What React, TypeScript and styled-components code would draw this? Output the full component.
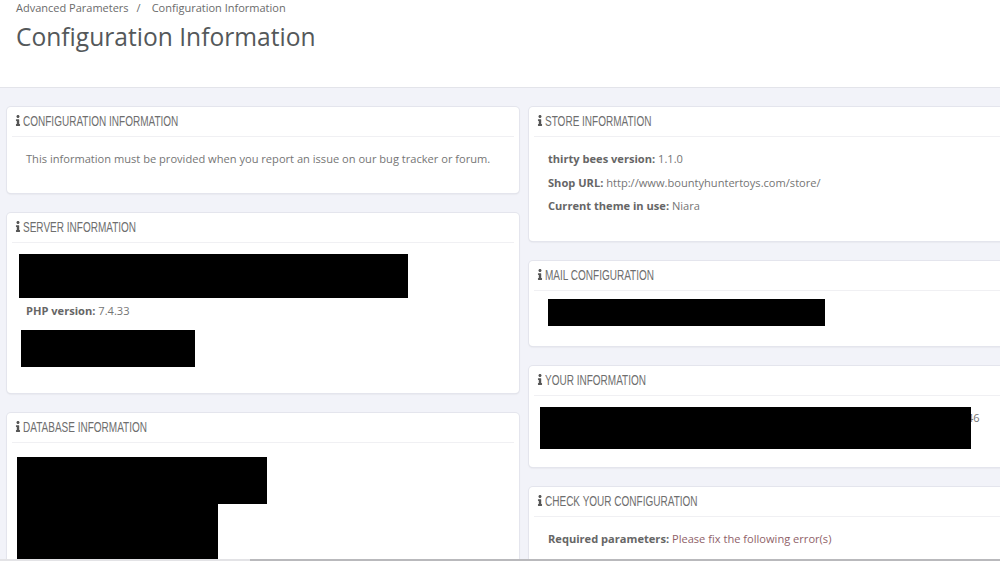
import React from 'react'
import styled, { createGlobalStyle } from 'styled-components'
import { FaInfo } from 'react-icons/fa'

const GlobalStyle = createGlobalStyle`
  html, body {
    margin: 0;
    height: 100%;
    overflow: hidden;
    background: #f2f3f9;
    font-family: 'Open Sans', 'Liberation Sans', sans-serif;
    color: #757575;
  }
`

const Page = styled.div`
  width: 1000px;
  height: 561px;
  overflow: hidden;
  position: relative;
`

const Header = styled.header`
  height: 88px;
  box-sizing: border-box;
  background: #fff;
  border-bottom: 1px solid #e3e4ea;
  padding-left: 16px;
`

const Breadcrumb = styled.div`
  display: flex;
  font-size: 11px;
  line-height: 16px;
  color: #6b6b6b;
`

const Separator = styled.span`
  margin: 0 11px 0 8px;
`

const Title = styled.h1`
  margin: 3px 0 0;
  font-size: 24.6px;
  font-weight: 400;
  line-height: 36px;
  color: #54585a;
`

const Columns = styled.div`
  display: grid;
  grid-template-columns: 512px 500px;
  column-gap: 10px;
  padding: 19px 0 0 7px;
`

const Column = styled.div`
  display: flex;
  flex-direction: column;
  gap: 20px;
`

const Card = styled.section<{ $height: number }>`
  box-sizing: border-box;
  height: ${(p) => p.$height}px;
  background: #fff;
  border-radius: 4px;
  box-shadow: 0 0 0 1px #e4e5ed, 0 1px 2px rgba(0, 0, 0, 0.12);
`

const CardHeading = styled.h3`
  display: flex;
  align-items: center;
  gap: 2px;
  box-sizing: border-box;
  height: 30px;
  margin: 0 5px;
  padding: 0 0 2px 3px;
  border-bottom: 1px solid #f0f0f3;
  font-size: 14px;
  font-weight: 400;
  color: #6e6e6e;
  svg {
    width: 6px;
    height: 11px;
    color: #555;
    flex: none;
  }
`

const HeadingLabel = styled.span`
  display: inline-block;
  font-family: 'Liberation Sans', sans-serif;
  white-space: nowrap;
  transform: scaleX(0.715);
  transform-origin: left center;
`

const CardBody = styled.div<{ $pt?: number; $pl?: number }>`
  padding: ${(p) => p.$pt ?? 13}px 0 0 ${(p) => p.$pl ?? 19}px;
`

const Line = styled.p<{ $top?: number; $gap?: number; $ml?: number }>`
  margin: ${(p) => p.$top ?? 0}px 0 ${(p) => p.$gap ?? 5.5}px ${(p) => p.$ml ?? 0}px;
  font-size: 11.1px;
  line-height: 18px;
  strong {
    font-weight: 700;
    color: #666;
  }
`

const ErrorText = styled.span`
  color: #8f5f69;
`

const Redaction = styled.div<{ $w: number; $h: number; $ml?: number }>`
  position: relative;
  flex: none;
  width: ${(p) => p.$w}px;
  height: ${(p) => p.$h}px;
  margin-left: ${(p) => p.$ml ?? 0}px;
  background: #000;
`

const RedactedRow = styled.div`
  display: flex;
  align-items: flex-start;
`

const Trailing = styled.span`
  margin: 2px 0 0 -4px;
  font-size: 11px;
  line-height: 18px;
`

const ScrollLine = styled.div`
  position: absolute;
  left: 0;
  right: 0;
  bottom: 0;
  height: 2px;
  background: linear-gradient(to right, #e3e3e6 250px, #b9b9bc 250px);
`

const Heading: React.FC<{ title: string }> = ({ title }) => (
  <CardHeading>
    <FaInfo />
    <HeadingLabel>{title}</HeadingLabel>
  </CardHeading>
)

const App: React.FC = () => {
  return (
    <Page>
      <GlobalStyle />
      <Header>
        <Breadcrumb>
          <span>Advanced Parameters</span>
          <Separator>/</Separator>
          <span>Configuration Information</span>
        </Breadcrumb>
        <Title>Configuration Information</Title>
      </Header>
      <Columns>
        <Column>
          <Card $height={86}>
            <Heading title="CONFIGURATION INFORMATION" />
            <CardBody>
              <Line>This information must be provided when you report an issue on our bug tracker or forum.</Line>
            </CardBody>
          </Card>
          <Card $height={180}>
            <Heading title="SERVER INFORMATION" />
            <CardBody $pl={12} $pt={11}>
              <Redaction $w={389} $h={44} />
              <Line $top={4} $ml={7} $gap={10}>
                <strong>PHP version:</strong> 7.4.33
              </Line>
              <Redaction $w={174} $h={37} $ml={2} />
            </CardBody>
          </Card>
          <Card $height={200}>
            <Heading title="DATABASE INFORMATION" />
            <CardBody $pl={10} $pt={14}>
              <Redaction $w={250} $h={47} />
              <Redaction $w={201} $h={70} />
            </CardBody>
          </Card>
        </Column>
        <Column>
          <Card $height={134}>
            <Heading title="STORE INFORMATION" />
            <CardBody>
              <Line>
                <strong>thirty bees version:</strong> 1.1.0
              </Line>
              <Line>
                <strong>Shop URL:</strong> http://www.bountyhuntertoys.com/store/
              </Line>
              <Line>
                <strong>Current theme in use:</strong> Niara
              </Line>
            </CardBody>
          </Card>
          <Card $height={85}>
            <Heading title="MAIL CONFIGURATION" />
            <CardBody $pt={8}>
              <Redaction $w={277} $h={27} />
            </CardBody>
          </Card>
          <Card $height={101}>
            <Heading title="YOUR INFORMATION" />
            <CardBody $pl={11} $pt={11}>
              <RedactedRow>
                <Redaction $w={431} $h={42} />
                <Trailing>46</Trailing>
              </RedactedRow>
            </CardBody>
          </Card>
          <Card $height={100}>
            <Heading title="CHECK YOUR CONFIGURATION" />
            <CardBody>
              <Line>
                <strong>Required parameters:</strong> <ErrorText>Please fix the following error(s)</ErrorText>
              </Line>
            </CardBody>
          </Card>
        </Column>
      </Columns>
      <ScrollLine />
    </Page>
  )
}

export default App
